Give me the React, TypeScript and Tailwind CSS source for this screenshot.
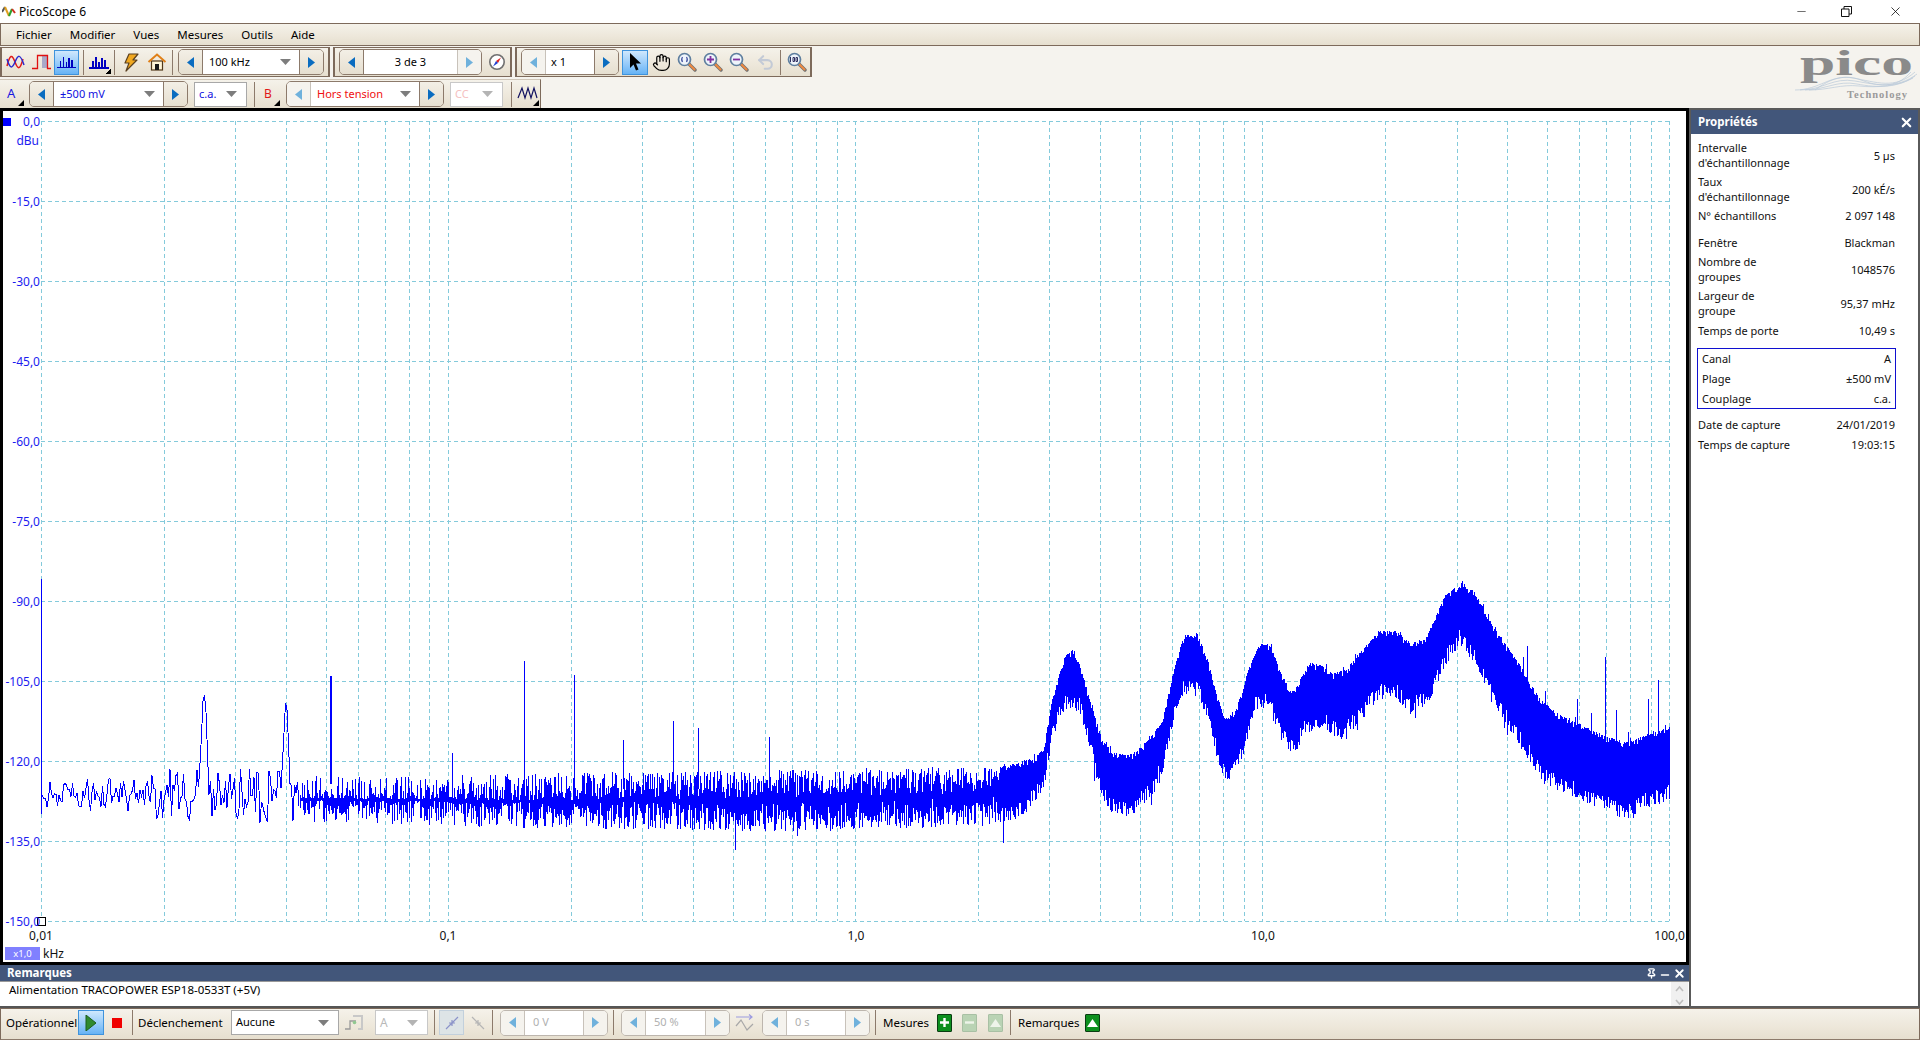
import { ReactNode } from 'react';
import { Hand, Undo2, Pin, Minus, X } from 'lucide-react';

// --- trace data -----------------------------------------------------------

const mulberry = (seed: number) => () => {
  seed |= 0;
  seed = (seed + 0x6d2b79f5) | 0;
  let t = Math.imul(seed ^ (seed >>> 15), 1 | seed);
  t = (t + Math.imul(t ^ (t >>> 7), 61 | t)) ^ t;
  return ((t ^ (t >>> 14)) >>> 0) / 4294967296;
};

const fromZoom = (pts: number[][]) => pts.map(([x, y]) => [1000 + x / 2.317, 560 + y / 3]);

const TOP = [
  [300, 778], [500, 776], [800, 771],
  ...fromZoom([
    [0, 625], [50, 605], [80, 595], [100, 570], [120, 420], [150, 285], [170, 270], [185, 320], [205, 410], [235, 540],
    [260, 580], [300, 590], [340, 545], [375, 490], [400, 340], [425, 230], [455, 220], [480, 300], [500, 400], [520, 480],
    [545, 455], [575, 330], [600, 255], [625, 255], [650, 340], [675, 400], [700, 350], [715, 310], [745, 320], [770, 345],
    [800, 330], [840, 270], [880, 215], [915, 215], [950, 250], [985, 240], [1030, 110], [1070, 70], [1100, 100], [1140, 200],
    [1200, 310], [1250, 420], [1300, 470], [1350, 500], [1400, 530], [1450, 550], [1500, 525], [1550, 505],
  ]),
];

const BOT = [
  [300, 822], [500, 828], [800, 832],
  ...fromZoom([
    [0, 795], [50, 775], [100, 695], [120, 545], [140, 465], [165, 445], [185, 465], [205, 565], [225, 675], [250, 755],
    [300, 775], [355, 705], [380, 625], [400, 505], [425, 405], [460, 415], [490, 525], [505, 625], [530, 675], [560, 605],
    [590, 455], [620, 445], [650, 545], [680, 595], [705, 525], [745, 505], [790, 545], [830, 495], [880, 415], [920, 425],
    [950, 465], [990, 435], [1030, 325], [1065, 255], [1100, 325], [1140, 425], [1180, 515], [1220, 595], [1260, 675],
    [1330, 715], [1400, 755], [1450, 785], [1500, 745], [1550, 725],
  ]),
];

const SPIKES = [
  [41, 580, 815], [329.5, 677, 785], [330.5, 677, 785], [452, 754, 790], [524, 662, 790], [574, 676, 790], [623, 741, 790],
  [673, 722, 790], [698, 729, 790], [769, 738, 790], [735, 790, 851], [1003, 800, 844], [1527, 647, 720], [1523, 658, 720],
  [1545, 692, 730], [1577, 700, 750], [1591, 714, 750], [1605, 658, 750], [1616, 711, 750], [1628, 733, 760], [1648, 700, 760],
  [1658, 681, 760],
];

const interp = (pts: number[][], x: number) => {
  for (let i = 1; i < pts.length; i++) {
    if (x <= pts[i][0]) {
      const [x0, y0] = pts[i - 1];
      const [x1, y1] = pts[i];
      return y0 + ((y1 - y0) * (x - x0)) / (x1 - x0);
    }
  }
  return pts[pts.length - 1][1];
};

const buildTrace = () => {
  const rng = mulberry(11);
  const parts: string[] = [];

  // low end: a few samples per pixel, drawn as a plain line
  let y = 794;
  let line = '';
  for (let x = 41; x < 300; x += 1.5) {
    const amp = x < 150 ? 20 : 27;
    const target = 794 + (rng() - 0.45) * 2 * amp;
    y = x < 150 ? y + (target - y) * 0.8 : target;
    const w1 = Math.exp(-(((x - 204) / 4) ** 2));
    const w2 = Math.exp(-(((x - 286) / 3) ** 2));
    const py = y + (695 - y) * w1 + (701 - y) * w2;
    line += `${line ? 'L' : 'M'}${x.toFixed(1)} ${py.toFixed(1)}`;
  }
  parts.push(line);

  // everything above that is a min/max column per pixel
  for (let x = 300; x <= 1669; x++) {
    const top = interp(TOP, x);
    const bot = interp(BOT, x);
    const mid = (top + bot) / 2;
    let a: number;
    let b: number;
    if (x < 1000) {
      const k = 1.8 - 1.1 * Math.min(1, (x - 300) / 400);
      a = mid - (mid - top) * Math.pow(rng(), k) - 1;
      b = mid + (bot - mid) * Math.pow(rng(), k) + 1;
      if (rng() < 0.02) b += rng() * 12;
    } else {
      a = top + Math.pow(rng(), 2.5) * 6;
      if (rng() < 0.06) a -= rng() * 5;
      b = bot - Math.pow(rng(), 1.4) * 16;
      if (rng() < 0.04) b += rng() * 14;
    }
    parts.push(`M${x + 0.5} ${a.toFixed(1)}V${b.toFixed(1)}`);
  }
  for (const [x, y0, y1] of SPIKES) parts.push(`M${x + 0.5} ${y0}V${y1}`);
  return parts.join('');
};

const TRACE = buildTrace();

const X0 = 41;
const DECADE = 407.1;
const VLINES: number[] = [];
for (let d = 0; d < 4; d++) {
  for (let m = 1; m < 10; m++) VLINES.push(X0 + (d + Math.log10(m)) * DECADE);
}
VLINES.push(X0 + 4 * DECADE);

const HLINES = Array.from({ length: 11 }, (_, i) => i);

// --- small drawings -------------------------------------------------------

const Corner = () => <polygon points="24,24 24,18 18,24" fill="#000" />;

const SineIcon = () => (
  <svg width="24" height="24" viewBox="0 0 24 24" fill="none" strokeWidth="1.5">
    <path d="M4 16C7 4 9 4 12 12S17 20 20 9" stroke="#e01818" />
    <path d="M4 9C7 19 9 19 12 12S17 3 21 15" stroke="#2a2ad0" />
  </svg>
);

const PulseIcon = () => (
  <svg width="24" height="24" viewBox="0 0 24 24" fill="none">
    <rect x="13" y="6" width="6" height="12" fill="#a9a9c8" />
    <path d="M3 18.5H8.5V5.5H18.5V18.5H22" stroke="#e01010" strokeWidth="1.3" />
  </svg>
);

const BarsIcon = ({ corner }: { corner?: boolean }) => (
  <svg width="24" height="24" viewBox="0 0 24 24" fill="#0000c0" shapeRendering="crispEdges">
    <rect x="2" y="17" width="20" height="1.5" />
    <rect x="5" y="11" width="1.5" height="6" />
    <rect x="8" y="7" width="1.5" height="10" />
    <rect x="11" y="12" width="1.5" height="5" />
    <rect x="14" y="8" width="1.5" height="9" />
    <rect x="17" y="10" width="1.5" height="7" />
    {corner && <Corner />}
  </svg>
);

const BoltIcon = () => (
  <svg width="24" height="24" viewBox="0 0 24 24">
    <path d="M10 4H19L14 10H18L7 21L10 13H6Z" fill="#f0a820" stroke="#5a4020" strokeWidth="1.2" strokeLinejoin="round" />
  </svg>
);

const HouseIcon = () => (
  <svg width="24" height="24" viewBox="0 0 24 24">
    <rect x="6.5" y="11" width="11" height="9" fill="#fff5d8" stroke="#50381a" strokeWidth="1.2" />
    <rect x="10" y="14" width="4" height="6" fill="#1a1a1a" />
    <path d="M3.5 12L12 4.5L20.5 12" fill="none" stroke="#e08018" strokeWidth="2" />
  </svg>
);

const CompassIcon = () => (
  <svg width="18" height="18" viewBox="0 0 18 18">
    <circle cx="9" cy="9" r="7.2" fill="#fff" stroke="#707070" strokeWidth="1.6" />
    <polygon points="13,4.5 10,10 8,8" fill="#e02020" />
    <polygon points="5,13.5 8,8 10,10" fill="#2040d0" />
  </svg>
);

const CursorIcon = () => (
  <svg width="14" height="20" viewBox="0 0 14 20">
    <path d="M2 1V16L5.5 12.5L8 18.5L10.5 17.5L8 11.5H13Z" fill="#000" />
  </svg>
);

const Lens = ({ children }: { children?: ReactNode }) => (
  <svg width="20" height="20" viewBox="0 0 20 20">
    <path d="M11.5 11.5L18 18" stroke="#707070" strokeWidth="3.4" strokeLinecap="round" />
    <path d="M12 12L17.5 17.5" stroke="#f08a40" strokeWidth="2" strokeLinecap="round" />
    <circle cx="7.5" cy="7.5" r="6" fill="#eef4fb" stroke="#5f7f9f" strokeWidth="1.7" />
    {children}
  </svg>
);

const WaveIcon = () => (
  <svg width="24" height="24" viewBox="0 0 24 24" fill="none">
    <path d="M3 16L7 6L10 16L13 6L16 16L19 6L22 16" stroke="#101060" strokeWidth="1.2" />
    <Corner />
  </svg>
);

const TriggerIcon = () => (
  <svg width="20" height="20" viewBox="0 0 20 20" fill="none">
    <path d="M1 16H6V8H12" stroke="#9a9a9a" strokeWidth="1.3" />
    <path d="M9 3H18V16L14 16" stroke="#c8c8c8" strokeWidth="2" />
    <circle cx="10.5" cy="9.5" r="1.8" fill="#90c890" />
  </svg>
);

const EdgeIcon = ({ down, color }: { down?: boolean; color: string }) => (
  <svg width="18" height="18" viewBox="0 0 18 18" fill="none" stroke={color} strokeWidth="1.2">
    {down ? <path d="M3 3L15 15M6 9H12M9 6V12" /> : <path d="M3 15L15 3M6 9H12M9 6V12" />}
  </svg>
);

const DelayIcon = () => (
  <svg width="22" height="22" viewBox="0 0 22 22" fill="none" strokeWidth="1.2">
    <path d="M2 5H18M15 2.5L18 5L15 7.5" stroke="#9c9ce0" />
    <path d="M2 14L7 8L13 18L19 12" stroke="#a8a8a8" />
  </svg>
);

const Triangle = ({ dir, off }: { dir: 'left' | 'right'; off?: boolean }) => (
  <svg width="7" height="11" viewBox="0 0 7 11">
    <polygon points={dir === 'left' ? '7,0 7,11 0,5.5' : '0,0 0,11 7,5.5'} fill={off ? '#6fb1dc' : '#0a6cc0'} />
  </svg>
);

const Caret = ({ off }: { off?: boolean }) => (
  <svg width="11" height="6" viewBox="0 0 11 6" className="shrink-0">
    <polygon points="0,0 11,0 5.5,6" fill={off ? '#b4b4b4' : '#7d7d7d'} />
  </svg>
);

// --- toolbar parts --------------------------------------------------------

const ToolBtn = ({ children, active, className }: { children: ReactNode; active?: boolean; className: string }) => (
  <div
    className={`flex items-center justify-center shrink-0 h-[25px] ${className} ${
      active ? 'border border-[#3f93dc] bg-gradient-to-b from-[#cfe8fd] to-[#66b3f5]' : ''
    }`}
  >
    {children}
  </div>
);

const Sep = ({ className }: { className: string }) => <div className={`w-px h-[25px] bg-[#8c7a6b] shrink-0 ${className}`} />;

const Stepper = ({
  children,
  className,
  leftOff,
  rightOff,
  allOff,
}: {
  children: ReactNode;
  className: string;
  leftOff?: boolean;
  rightOff?: boolean;
  allOff?: boolean;
}) => (
  <div
    className={`flex h-[26px] shrink-0 rounded-[5px] border overflow-hidden ${allOff ? 'border-[#bdb6ae]' : 'border-[#8c7a6b]'} ${className}`}
  >
    <div className={`w-[24px] flex items-center justify-center border-r ${leftOff ? 'bg-[#f5f3ee] border-[#c8c2ba]' : 'bg-gradient-to-b from-[#f3efe6] to-[#e6dfd0] border-[#8c7a6b]'}`}>
      <Triangle dir="left" off={leftOff} />
    </div>
    <div className="flex-1 min-w-0 bg-white flex items-center">{children}</div>
    <div className={`w-[24px] flex items-center justify-center border-l ${rightOff ? 'bg-[#f5f3ee] border-[#c8c2ba]' : 'bg-gradient-to-b from-[#f3efe6] to-[#e6dfd0] border-[#8c7a6b]'}`}>
      <Triangle dir="right" off={rightOff} />
    </div>
  </div>
);

const Combo = ({ text, className, textClass, off }: { text: string; className: string; textClass: string; off?: boolean }) => (
  <div className={`h-[25px] shrink-0 bg-white border flex items-center justify-between pl-[4px] pr-[9px] ${off ? 'border-[#c8c8c8]' : 'border-[#a8a8a8]'} ${className}`}>
    <span className={textClass}>{text}</span>
    <Caret off={off} />
  </div>
);

const GreenBtn = ({ children, off, className }: { children: ReactNode; off?: boolean; className: string }) => (
  <div className={`w-[15px] h-[18px] flex items-center justify-center border rounded-[1px] shrink-0 ${off ? 'bg-[#b9d3b4] border-[#a8c0a4]' : 'bg-[#0d8f1e] border-[#0a3d12]'} ${className}`}>
    {children}
  </div>
);

const PicoLogo = () => (
  <svg width="125" height="60" viewBox="0 0 125 60" className="overflow-visible">
    <text x="5" y="27" fontFamily="'Liberation Serif', serif" fontWeight="700" fontSize="36" fill="#8a8a8a" textLength="113" lengthAdjust="spacingAndGlyphs">
      pico
    </text>
    <g fill="none" stroke="#b9c8d8" strokeWidth="0.7">
      <path d="M0 42C25 42 35 26 58 30S100 42 120 24" />
      <path d="M5 42C28 42 38 29 60 33S102 41 122 26" />
      <path d="M10 42C30 42 42 32 62 36S104 40 120 28" />
      <path d="M14 42C34 42 46 36 64 38S104 38 118 30" />
      <path d="M20 42C36 30 50 26 66 32S100 42 116 24" />
    </g>
    <text x="52" y="50" fontFamily="'Liberation Serif', serif" fontWeight="700" fontSize="10.5" fill="#9a9a9a" textLength="60" lengthAdjust="spacing">
      Technology
    </text>
  </svg>
);

const PropRow = ({ label, value, className }: { label: ReactNode; value: string; className: string }) => (
  <div className={`flex items-center justify-between leading-[15px] ${className}`}>
    <span className="w-[120px]">{label}</span>
    <span>{value}</span>
  </div>
);

// --- page -----------------------------------------------------------------

const MENU = ['Fichier', 'Modifier', 'Vues', 'Mesures', 'Outils', 'Aide'];
const BEIGE = 'bg-[linear-gradient(180deg,#f5f2ea_0%,#ede7da_60%,#e6dfcf_100%)]';
const FONT = "font-['Noto_Sans','Liberation_Sans',sans-serif]";

export default function App() {
  return (
    <div className={`w-[1920px] h-[1040px] flex flex-col overflow-hidden bg-white text-[11.5px] text-black ${FONT}`}>
      {/* title bar */}
      <div className="h-[23px] flex items-center shrink-0">
        <svg width="15" height="15" viewBox="0 0 15 15" className="ml-[2px] mr-[2px]" fill="none" strokeWidth="2">
          <path d="M0 8L3 3" stroke="#555" />
          <path d="M3 3L7 12" stroke="#e0a020" />
          <path d="M7 12L10 5" stroke="#2ca02c" />
          <path d="M10 5L13 9" stroke="#d03020" />
        </svg>
        <span className="text-[12px]">PicoScope 6</span>
        <div className="ml-auto flex items-center">
          <Minus size={13} strokeWidth={1.4} className="text-[#444] mr-[33px]" />
          <svg width="11" height="11" viewBox="0 0 11 11" fill="none" stroke="#111" className="mr-[36px]">
            <path d="M3 3V0.5H10.5V8H8M0.5 3H8V10.5H0.5Z" />
          </svg>
          <X size={15} strokeWidth={1.2} className="mr-[17px]" />
        </div>
      </div>

      {/* menu */}
      <div className={`h-[23px] shrink-0 flex items-center gap-[18px] pl-[15px] border border-[#7d6a5b] ${BEIGE}`}>
        {MENU.map((m) => (
          <span key={m}>{m}</span>
        ))}
      </div>

      {/* toolbars + logo */}
      <div className="h-[62px] shrink-0 bg-[#f5f3ee] flex justify-between">
        <div className="flex flex-col pt-px gap-[2px]">
          <div className="flex gap-[3px] h-[30px]">
            <div className={`w-[330px] flex items-center border-2 border-[#7d6a5b] border-y ${BEIGE}`}>
              <ToolBtn className="w-[24px] ml-px"><SineIcon /></ToolBtn>
              <ToolBtn className="w-[24px] ml-[2px]"><PulseIcon /></ToolBtn>
              <ToolBtn className="w-[25px] ml-px" active><BarsIcon /></ToolBtn>
              <Sep className="ml-[4px]" />
              <ToolBtn className="w-[24px] ml-[3px]"><BarsIcon corner /></ToolBtn>
              <Sep className="ml-[3px]" />
              <ToolBtn className="w-[24px] ml-[4px]"><BoltIcon /></ToolBtn>
              <ToolBtn className="w-[24px] ml-[2px]"><HouseIcon /></ToolBtn>
              <Sep className="ml-[3px]" />
              <Stepper className="w-[146px] ml-[5px]">
                <div className="w-full flex items-center justify-between pl-[6px] pr-[8px] text-[11px]">
                  <span>100 kHz</span>
                  <Caret />
                </div>
              </Stepper>
            </div>
            <div className={`w-[179px] flex items-center border-2 border-y border-[#7d6a5b] pl-[4px] ${BEIGE}`}>
              <Stepper className="w-[143px]" rightOff>
                <span className="w-full text-center text-[11px]">3 de 3</span>
              </Stepper>
              <ToolBtn className="w-[26px] ml-[2px]"><CompassIcon /></ToolBtn>
            </div>
            <div className={`w-[297px] flex items-center border-2 border-y border-[#7d6a5b] pl-[4px] ${BEIGE}`}>
              <Stepper className="w-[98px]" leftOff>
                <span className="pl-[5px] text-[11px]">x 1</span>
              </Stepper>
              <ToolBtn className="w-[26px] ml-[3px]" active><CursorIcon /></ToolBtn>
              <ToolBtn className="w-[26px]"><Hand size={19} strokeWidth={1.5} /></ToolBtn>
              <ToolBtn className="w-[26px]">
                <Lens>
                  <path d="M5.5 5C4.5 6.5 4.5 8.5 5.5 10M9.5 5C10.5 6.5 10.5 8.5 9.5 10" stroke="#4050a0" fill="none" strokeWidth="1.2" />
                </Lens>
              </ToolBtn>
              <ToolBtn className="w-[26px]">
                <Lens>
                  <path d="M4 7.5H11M7.5 4V11" stroke="#8030a0" strokeWidth="1.8" />
                </Lens>
              </ToolBtn>
              <ToolBtn className="w-[26px]">
                <Lens>
                  <path d="M4 7.5H11" stroke="#8030a0" strokeWidth="1.8" />
                </Lens>
              </ToolBtn>
              <ToolBtn className="w-[26px]"><Undo2 size={19} strokeWidth={2.6} className="text-[#c3cad6]" /></ToolBtn>
              <Sep className="ml-[2px]" />
              <ToolBtn className="w-[26px] ml-[3px]">
                <Lens>
                  <path d="M3.5 5V10M6 5.5H7.5V9.5H6ZM9 5.5H10.5V9.5H9Z" stroke="#303060" fill="none" strokeWidth="1" />
                </Lens>
              </ToolBtn>
            </div>
          </div>
          <div className={`flex items-center w-[541px] h-[29px] border-r border-[#7d6a5b] border-t border-t-[#cfc6b8] ${BEIGE}`}>
            <div className="w-[17px] ml-[7px] relative h-[24px] flex items-center">
              <span className="text-[#1818e0] text-[13px]">A</span>
              <svg width="8" height="8" viewBox="0 0 8 8" className="absolute right-0 bottom-0"><polygon points="8,2 8,8 2,8" /></svg>
            </div>
            <Stepper className="w-[159px] ml-[5px]">
              <div className="w-full flex items-center justify-between pl-[6px] pr-[8px] text-[#1010e0] text-[11px]">
                <span>±500 mV</span>
                <Caret />
              </div>
            </Stepper>
            <Combo text="c.a." className="w-[53px] ml-[6px]" textClass="text-[#1010e0] text-[11px]" />
            <Sep className="ml-[7px]" />
            <div className="w-[22px] ml-[3px] relative h-[24px] flex items-center">
              <span className="text-[#e01818] text-[12px] pl-[6px]">B</span>
              <svg width="8" height="8" viewBox="0 0 8 8" className="absolute right-0 bottom-0"><polygon points="8,2 8,8 2,8" /></svg>
            </div>
            <Stepper className="w-[158px] ml-[6px]" leftOff>
              <div className="w-full flex items-center justify-between pl-[6px] pr-[8px] text-[#f01010] text-[11px]">
                <span>Hors tension</span>
                <Caret />
              </div>
            </Stepper>
            <Combo text="CC" className="w-[53px] ml-[6px]" textClass="text-[#f5c0c0] text-[11px]" off />
            <Sep className="ml-[8px]" />
            <ToolBtn className="w-[24px] ml-[3px]"><WaveIcon /></ToolBtn>
          </div>
        </div>
        <div className="pt-[2px]">
          <PicoLogo />
        </div>
      </div>

      {/* main */}
      <div className="flex-1 min-h-0 flex">
        <div className="w-[1689px] shrink-0 flex flex-col">
          <div className="flex-1 min-h-0 border-[3px] border-black bg-white">
            <svg width="1683" height="851" viewBox="3 112 1683 851" className="block">
              <g stroke="#84cadb" strokeWidth="1" strokeDasharray="4 3" shapeRendering="crispEdges">
                {VLINES.map((x) => (
                  <line key={x} x1={Math.round(x) + 0.5} x2={Math.round(x) + 0.5} y1="122" y2="922" />
                ))}
                {HLINES.map((i) => (
                  <line key={i} x1="41" x2="1670" y1={122 + i * 80 + 0.5} y2={122 + i * 80 + 0.5} />
                ))}
              </g>
              <path d={TRACE} fill="none" stroke="#0000ff" strokeWidth="1" shapeRendering="crispEdges" />
              <rect x="3" y="119" width="8" height="8" fill="#0000ff" />
              <rect x="37.5" y="918.5" width="8" height="8" fill="#fff" stroke="#000" />
              <g fontFamily="'Noto Sans','Liberation Sans',sans-serif" fontSize="12" fill="#1c1cf0" textAnchor="end">
                {HLINES.map((i) => (
                  <text key={i} x="40" y={127 + i * 80}>
                    {i === 0 ? '0,0' : `-${i * 15},0`}
                  </text>
                ))}
                <text x="39" y="146">dBu</text>
              </g>
              <g fontFamily="'Noto Sans','Liberation Sans',sans-serif" fontSize="12" fill="#111" textAnchor="middle">
                <text x="41" y="941">0,01</text>
                <text x="448" y="941">0,1</text>
                <text x="856" y="941">1,0</text>
                <text x="1263" y="941">10,0</text>
                <text x="1685" y="941" textAnchor="end">100,0</text>
                <text x="43" y="959" textAnchor="start">kHz</text>
              </g>
              <rect x="5" y="948" width="35" height="13" fill="#8080ff" />
              <text x="22.5" y="958" fontFamily="'Noto Sans','Liberation Sans',sans-serif" fontSize="9.5" fill="#fff" textAnchor="middle">x1,0</text>
            </svg>
          </div>
          {/* notes */}
          <div className="h-[43px] shrink-0 flex flex-col bg-[#42567a] border-b-2 border-[#555]">
            <div className="h-[16px] shrink-0 flex items-center justify-between pl-[7px] pr-[3px] text-white font-bold text-[11.5px]">
              <span>Remarques</span>
              <div className="flex items-center text-white">
                <Pin size={11} strokeWidth={3} />
                <Minus size={12} strokeWidth={3} className="ml-[2px] mt-[4px]" />
                <X size={13} strokeWidth={3.4} className="ml-[2px]" />
              </div>
            </div>
            <div className="flex-1 min-h-0 bg-white border-t border-[#999] flex items-start justify-between pl-[9px] text-[11.5px]">
              <span className="leading-[16px]">Alimentation TRACOPOWER ESP18-0533T (+5V)</span>
              <div className="w-[17px] h-full mr-[1px] bg-[#f0f0f0] flex flex-col items-center justify-between text-[#bdbdbd]">
                <svg width="9" height="7" viewBox="0 0 9 7" fill="none" stroke="currentColor" strokeWidth="1.6" className="mt-[3px]"><path d="M1 6L4.5 2L8 6" /></svg>
                <svg width="9" height="7" viewBox="0 0 9 7" fill="none" stroke="currentColor" strokeWidth="1.6"><path d="M1 1L4.5 5L8 1" /></svg>
              </div>
            </div>
          </div>
        </div>

        {/* properties */}
        <div className="flex-1 min-w-0 border-2 border-[#5a5a5a] flex flex-col bg-white">
          <div className="h-[24px] shrink-0 bg-[#42567a] text-white flex items-center justify-between pl-[7px] pr-[4px] font-bold text-[11.5px]">
            <span>Propriétés</span>
            <X size={15} strokeWidth={3.4} />
          </div>
          <div className="pl-[7px] pr-[23px] pt-[5px] text-[#111] text-[11px]">
            <PropRow className="h-[32px] mb-[2px]" label={<>Intervalle<br />d'échantillonnage</>} value="5 µs" />
            <PropRow className="h-[32px] mb-[2px]" label={<>Taux<br />d'échantillonnage</>} value="200 kÉ/s" />
            <PropRow className="h-[16px] mb-[10px]" label="N° échantillons" value="2 097 148" />
            <PropRow className="h-[18px] mb-[2px]" label="Fenêtre" value="Blackman" />
            <PropRow className="h-[32px] mb-[2px]" label={<>Nombre de<br />groupes</>} value="1048576" />
            <PropRow className="h-[32px] mb-[2px]" label={<>Largeur de<br />groupe</>} value="95,37 mHz" />
            <PropRow className="h-[18px] mb-[9px]" label="Temps de porte" value="10,49 s" />
            <div className="-ml-[1px] -mr-[1px] h-[61px] border border-[#1010d0] flex flex-col justify-center gap-[4px] px-[4px] mb-[6px]">
              <PropRow className="h-[16px]" label="Canal" value="A" />
              <PropRow className="h-[16px]" label="Plage" value="±500 mV" />
              <PropRow className="h-[16px]" label="Couplage" value="c.a." />
            </div>
            <PropRow className="h-[18px] mb-[2px]" label="Date de capture" value="24/01/2019" />
            <PropRow className="h-[18px]" label="Temps de capture" value="19:03:15" />
          </div>
        </div>
      </div>

      {/* bottom toolbar */}
      <div className={`h-[32px] shrink-0 flex items-center pb-[3px] border border-[#7d6a5b] border-b-[#8c7a6b] ${BEIGE}`}>
        <span className="ml-[5px] w-[72px]">Opérationnel</span>
        <ToolBtn className="w-[26px]" active>
          <svg width="12" height="16" viewBox="0 0 12 16"><polygon points="1,0 1,16 11,8" fill="#2f8a2f" stroke="#1c5f1c" /></svg>
        </ToolBtn>
        <div className="w-[10px] h-[10px] bg-[#f00000] ml-[8px] shrink-0" />
        <Sep className="ml-[10px]" />
        <span className="ml-[5px] w-[93px]">Déclenchement</span>
        <Combo text="Aucune" className="w-[108px]" textClass="text-[11px]" />
        <ToolBtn className="w-[24px] ml-[3px]"><TriggerIcon /></ToolBtn>
        <Combo text="A" className="w-[53px] ml-[9px]" textClass="text-[#b8b8b8] text-[12px]" off />
        <Sep className="ml-[6px]" />
        <ToolBtn className="w-[25px] ml-[4px] border border-[#c2d0dc] bg-[#dde4e6]"><EdgeIcon color="#8b93c9" /></ToolBtn>
        <ToolBtn className="w-[25px] ml-[1px]"><EdgeIcon down color="#b5b5b5" /></ToolBtn>
        <Sep className="ml-[2px]" />
        <Stepper className="w-[108px] ml-[7px]" allOff leftOff rightOff>
          <span className="pl-[8px] text-[#b0b0b0] text-[11px]">0 V</span>
        </Stepper>
        <Sep className="ml-[5px]" />
        <Stepper className="w-[109px] ml-[7px]" allOff leftOff rightOff>
          <span className="pl-[8px] text-[#b0b0b0] text-[11px]">50 %</span>
        </Stepper>
        <ToolBtn className="w-[26px] ml-[2px]"><DelayIcon /></ToolBtn>
        <Stepper className="w-[108px] ml-[4px]" allOff leftOff rightOff>
          <span className="pl-[8px] text-[#b0b0b0] text-[11px]">0 s</span>
        </Stepper>
        <Sep className="ml-[5px]" />
        <span className="ml-[7px] w-[54px]">Mesures</span>
        <GreenBtn className=""><svg width="11" height="11" viewBox="0 0 11 11"><path d="M5.5 1V10M1 5.5H10" stroke="#fff" strokeWidth="2.4" /></svg></GreenBtn>
        <GreenBtn className="ml-[10px]" off><svg width="11" height="11" viewBox="0 0 11 11"><path d="M1 5.5H10" stroke="#eef4ea" strokeWidth="2.4" /></svg></GreenBtn>
        <GreenBtn className="ml-[11px]" off><svg width="11" height="8" viewBox="0 0 11 8"><polygon points="0,8 11,8 5.5,0" fill="#eef4ea" /></svg></GreenBtn>
        <Sep className="ml-[7px]" />
        <span className="ml-[7px] w-[67px]">Remarques</span>
        <GreenBtn className=""><svg width="11" height="8" viewBox="0 0 11 8"><polygon points="0,8 11,8 5.5,0" fill="#fff" /></svg></GreenBtn>
      </div>
    </div>
  );
}
